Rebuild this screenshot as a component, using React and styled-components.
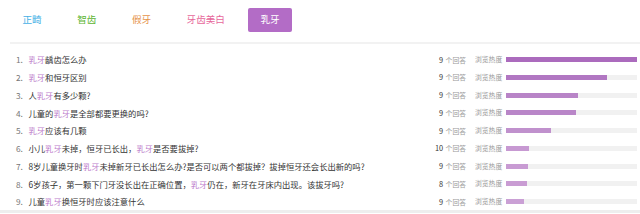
import React from "react";
import styled, { createGlobalStyle } from "styled-components";

const GlobalStyle = createGlobalStyle`
  html, body {
    margin: 0;
    padding: 0;
    background: #fff;
  }
  body {
    font-family: "Noto Sans CJK SC", "Noto Sans", sans-serif;
    color: #333;
  }
`;

const Page = styled.div`
  width: 640px;
  height: 214px;
  overflow: hidden;
  background: #fff;
`;

const TabBar = styled.div`
  display: flex;
  gap: 11.5px;
  padding: 7.5px 0 10px 0.5px;
  border-bottom: 2px solid #f2f2f2;
  margin-left: 10px;
`;

const Tab = styled.div`
  height: 24px;
  padding: 0 12px;
  display: flex;
  align-items: center;
  justify-content: center;
  font-size: 9.6px;
  line-height: 1;
  border-radius: 2px;
  color: ${(p) => (p.$active ? "#fff" : p.$color)};
  background: ${(p) => (p.$active ? "#b36cc6" : "transparent")};
`;

const List = styled.ol`
  list-style: none;
  margin: 0;
  padding: 7.2px 3px 0 16px;
  border-bottom: 3px solid #eeeeee;
`;

const Row = styled.li`
  height: 17.75px;
  display: flex;
  align-items: center;
  font-size: 8.3px;
  line-height: 1;
`;

const Num = styled.span`
  width: 12.5px;
  flex: none;
  color: #777;
`;

const Title = styled.span`
  flex: 1;
  color: #333;
  white-space: nowrap;
`;

const Hl = styled.span`
  color: #bc7ccc;
`;

const Count = styled.span`
  width: 40px;
  flex: none;
  text-align: right;
  font-size: 6.8px;
  color: #999;
  b {
    font-weight: normal;
    color: #333;
    font-size: 7.4px;
    margin-right: 2.5px;
  }
`;

const Label = styled.span`
  margin-left: 9px;
  width: 31px;
  flex: none;
  font-size: 6.8px;
  color: #999;
`;

const Track = styled.div`
  width: 131px;
  height: 5px;
  flex: none;
  background: #f1f1f1;
  display: flex;
`;

const Fill = styled.div`
  height: 100%;
  background: ${(p) => p.$color};
`;

const tabs = [
  { name: "正畸", color: "#45b0e5" },
  { name: "智齿", color: "#5cb531" },
  { name: "假牙", color: "#e6934a" },
  { name: "牙齿美白", color: "#e7679b" },
  { name: "乳牙", active: true },
];

const rows = [
  { parts: ["*乳牙", "龋齿怎么办"], n: 9, w: 131, c: "#ab6bbd" },
  { parts: ["*乳牙", "和恒牙区别"], n: 9, w: 101, c: "#b177c2" },
  { parts: ["人", "*乳牙", "有多少颗?"], n: 9, w: 72, c: "#b884c7" },
  { parts: ["儿童的", "*乳牙", "是全部都要更换的吗?"], n: 9, w: 70, c: "#b986c8" },
  { parts: ["*乳牙", "应该有几颗"], n: 9, w: 45, c: "#c091cd" },
  { parts: ["小儿", "*乳牙", "未掉，恒牙已长出，", "*乳牙", "是否要拔掉?"], n: 10, w: 23, c: "#c799d2" },
  {
    parts: ["8岁儿童换牙时", "*乳牙", "未掉新牙已长出怎么办?是否可以两个都拔掉？拔掉恒牙还会长出新的吗?"],
    n: 9,
    w: 22,
    c: "#c89bd3",
  },
  {
    parts: ["6岁孩子，第一颗下门牙没长出在正确位置，", "*乳牙", "仍在，新牙在牙床内出现。该拔牙吗?"],
    n: 8,
    w: 21,
    c: "#c99cd3",
  },
  { parts: ["儿童", "*乳牙", "换恒牙时应该注意什么"], n: 9, w: 18, c: "#caa0d5" },
];

export default function App() {
  return (
    <Page>
      <GlobalStyle />
      <TabBar>
        {tabs.map((t) => (
          <Tab key={t.name} $active={t.active} $color={t.color}>
            {t.name}
          </Tab>
        ))}
      </TabBar>
      <List>
        {rows.map((r, i) => (
          <Row key={i}>
            <Num>{i + 1}.</Num>
            <Title>
              {r.parts.map((p, j) =>
                p.startsWith("*") ? <Hl key={j}>{p.slice(1)}</Hl> : <span key={j}>{p}</span>
              )}
            </Title>
            <Count>
              <b>{r.n}</b>个回答
            </Count>
            <Label>浏览热度</Label>
            <Track>
              <Fill $color={r.c} style={{ width: r.w }} />
            </Track>
          </Row>
        ))}
      </List>
    </Page>
  );
}
